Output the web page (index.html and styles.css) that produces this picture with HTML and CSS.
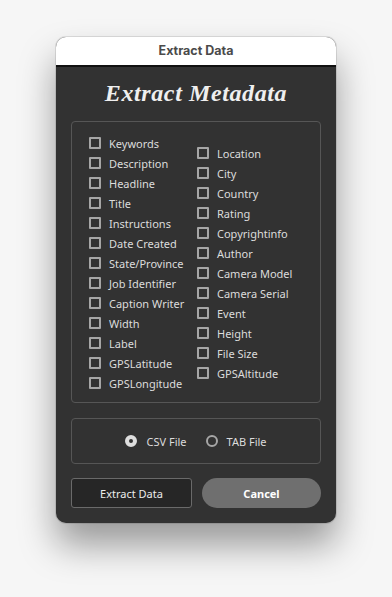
FILE: index.html
```html
<!DOCTYPE html>
<html lang="en">
<head>
  <meta charset="UTF-8" />
  <meta name="viewport" content="width=device-width, initial-scale=1" />
  <title>Extract Data</title>
  <link rel="stylesheet" href="styles.css">
</head>
<body>

  <div class="window">
    <div class="titlebar">Extract Data</div>
    <div class="content">
      <h1>Extract Metadata</h1>

      <div class="group fields">
        <div class="col">
          <label class="check"><span class="box"></span>Keywords</label>
          <label class="check"><span class="box"></span>Description</label>
          <label class="check"><span class="box"></span>Headline</label>
          <label class="check"><span class="box"></span>Title</label>
          <label class="check"><span class="box"></span>Instructions</label>
          <label class="check"><span class="box"></span>Date Created</label>
          <label class="check"><span class="box"></span>State/Province</label>
          <label class="check"><span class="box"></span>Job Identifier</label>
          <label class="check"><span class="box"></span>Caption Writer</label>
          <label class="check"><span class="box"></span>Width</label>
          <label class="check"><span class="box"></span>Label</label>
          <label class="check"><span class="box"></span>GPSLatitude</label>
          <label class="check"><span class="box"></span>GPSLongitude</label>
        </div>
        <div class="col col-right">
          <label class="check"><span class="box"></span>Location</label>
          <label class="check"><span class="box"></span>City</label>
          <label class="check"><span class="box"></span>Country</label>
          <label class="check"><span class="box"></span>Rating</label>
          <label class="check"><span class="box"></span>Copyrightinfo</label>
          <label class="check"><span class="box"></span>Author</label>
          <label class="check"><span class="box"></span>Camera Model</label>
          <label class="check"><span class="box"></span>Camera Serial</label>
          <label class="check"><span class="box"></span>Event</label>
          <label class="check"><span class="box"></span>Height</label>
          <label class="check"><span class="box"></span>File Size</label>
          <label class="check"><span class="box"></span>GPSAltitude</label>
        </div>
      </div>

      <div class="group formats">
        <label class="radio"><span class="dot on"></span>CSV File</label>
        <label class="radio"><span class="dot"></span>TAB File</label>
      </div>

      <div class="buttons">
        <button class="btn btn-primary">Extract Data</button>
        <button class="btn btn-cancel">Cancel</button>
      </div>
    </div>
  </div>

</body>
</html>
```

FILE: styles.css
```css
body {
  margin: 0;
  padding: 37px 0 75px 56px;
  background: #f6f6f6;
  font-family: "Noto Sans", "Open Sans", sans-serif;
}
.window {
  width: 280px;
  border-radius: 10px;
  overflow: hidden;
  background: #323232;
  box-shadow: 0 0 0 1px rgba(0,0,0,0.1), 0 22px 36px rgba(0,0,0,0.38);
}
.titlebar {
  height: 28px;
  line-height: 28px;
  background: #fff;
  border-bottom: 2px solid #111;
  text-align: center;
  font-family: "Inter", "Liberation Sans", sans-serif;
  font-weight: 700;
  font-size: 12.5px;
  color: #4a4a4a;
}
.content {
  padding: 0 15px 15px 15px;
}
h1 {
  margin: 0;
  height: 54px;
  line-height: 52px;
  text-align: center;
  font-family: "Liberation Serif", "DejaVu Serif", serif;
  font-style: italic;
  font-weight: 700;
  font-size: 24px;
  letter-spacing: 0.6px;
  color: #efefef;
}
.group {
  border: 1px solid #565656;
  border-radius: 4px;
}
.fields {
  display: flex;
  padding: 11px 0 9px 17px;
}
.col {
  width: 108px;
  display: flex;
  flex-direction: column;
}
.col-right {
  padding-top: 10px;
}
.check {
  display: flex;
  align-items: center;
  height: 20px;
  font-size: 11px;
  color: #dcdcdc;
  white-space: nowrap;
}
.box {
  width: 8px;
  height: 8px;
  border: 2px solid #a6a6a6;
  border-radius: 1px;
  margin-right: 8px;
  flex: none;
}
.formats {
  margin-top: 15px;
  height: 44px;
  display: flex;
  justify-content: center;
  align-items: center;
  gap: 19px;
}
.radio {
  display: flex;
  align-items: center;
  font-size: 11px;
  color: #dcdcdc;
}
.dot {
  width: 8px;
  height: 8px;
  border: 2px solid #a6a6a6;
  border-radius: 50%;
  margin-right: 9px;
}
.dot.on {
  width: 4px;
  height: 4px;
  border: 4px solid #dedede;
}
.buttons {
  display: flex;
  gap: 10px;
  margin-top: 14px;
}
.btn {
  flex: 1;
  height: 30px;
  font-family: "Noto Sans", "Open Sans", sans-serif;
  font-size: 11px;
  cursor: pointer;
}
.btn-primary {
  background: #262626;
  border: 1px solid #6a6a6a;
  border-radius: 3px;
  color: #ececec;
}
.btn-cancel {
  background: #6f6f6f;
  border: none;
  border-radius: 15px;
  color: #fff;
  font-weight: 700;
}
```
